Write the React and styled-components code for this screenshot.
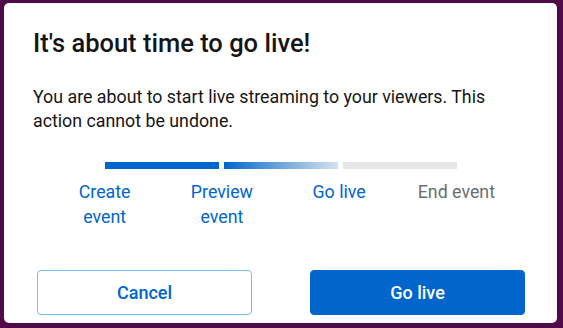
import React from "react";
import styled, { createGlobalStyle } from "styled-components";

const GlobalStyle = createGlobalStyle`
  html, body {
    margin: 0;
    padding: 0;
    background: #4f0a47;
    font-family: Roboto, "Liberation Sans", sans-serif;
  }
`;

const Page = styled.div`
  width: 563px;
  height: 328px;
  box-sizing: border-box;
  padding: 3px 6px 5px 4px;
  background: #4f0a47;
`;

const Dialog = styled.div`
  width: 553px;
  height: 320px;
  box-sizing: border-box;
  background: #ffffff;
  border-radius: 5px;
  padding: 25px 32px 0 29px;
  display: flex;
  flex-direction: column;
`;

const Title = styled.h1`
  margin: 0;
  font-size: 25.5px;
  line-height: 30px;
  font-weight: 500;
  color: #151515;
`;

const Body = styled.p`
  margin: 27px 0 0;
  font-size: 17.8px;
  line-height: 24px;
  color: #151515;
`;

const Stepper = styled.div`
  width: 469px;
  margin: 29px 0 0 13px;
  display: flex;
  flex-direction: column;
`;

const Bars = styled.div`
  display: grid;
  grid-template-columns: repeat(3, 1fr);
  gap: 5px;
  padding: 0 58.5px;
  height: 7px;
`;

const Bar = styled.div`
  height: 7px;
  background: ${(p) =>
    p.$state === "done"
      ? "#0066cc"
      : p.$state === "current"
      ? "linear-gradient(90deg, #0066cc 0%, #4f93d9 35%, #d6e2ee 100%)"
      : "#e6e6e6"};
`;

const Labels = styled.div`
  display: grid;
  grid-template-columns: repeat(4, 1fr);
  margin-top: 10px;
`;

const Label = styled.div`
  text-align: center;
  font-size: 17.8px;
  line-height: 25px;
  color: ${(p) => (p.$muted ? "#6a6e73" : "#0066cc")};
`;

const Footer = styled.div`
  margin-top: auto;
  margin-bottom: 8px;
  display: flex;
  justify-content: space-between;
  padding-left: 4px;
`;

const Button = styled.button`
  width: 215px;
  height: 45px;
  box-sizing: border-box;
  border-radius: 4px;
  font-family: Roboto, "Liberation Sans", sans-serif;
  font-size: 18px;
  font-weight: 500;
  cursor: pointer;
  border: 1px solid ${(p) => (p.$primary ? "#0066cc" : "#73bcf7")};
  background: ${(p) => (p.$primary ? "#0066cc" : "#ffffff")};
  color: ${(p) => (p.$primary ? "#ffffff" : "#0066cc")};
`;

export default function App() {
  return (
    <>
      <GlobalStyle />
      <Page>
        <Dialog>
          <Title>It's about time to go live!</Title>
          <Body>
            You are about to start live streaming to your viewers. This action
            cannot be undone.
          </Body>
          <Stepper>
            <Bars>
              <Bar $state="done" />
              <Bar $state="current" />
              <Bar $state="todo" />
            </Bars>
            <Labels>
              <Label>
                Create
                <br />
                event
              </Label>
              <Label>
                Preview
                <br />
                event
              </Label>
              <Label>Go live</Label>
              <Label $muted>End event</Label>
            </Labels>
          </Stepper>
          <Footer>
            <Button>Cancel</Button>
            <Button $primary>Go live</Button>
          </Footer>
        </Dialog>
      </Page>
    </>
  );
}
